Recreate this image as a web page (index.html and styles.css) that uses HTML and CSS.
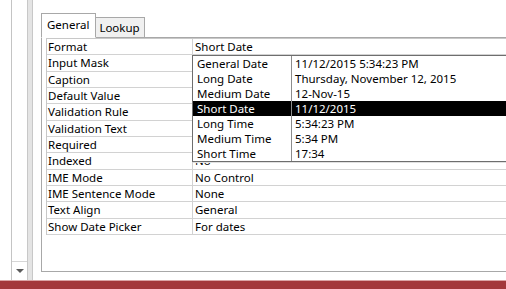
FILE: index.html
```html
<!DOCTYPE html>
<html lang="en">
<head>
    <meta charset="UTF-8">
    <title>Field Properties</title>
    <link rel="stylesheet" href="styles.css">
</head>
<body>
    <div class="app">
        <div class="main">
            <div class="gutter"></div>
            <div class="vscroll">
                <div class="scroll-down"><span class="arrow"></span></div>
            </div>
            <div class="splitter"></div>
            <div class="pane">
                <div class="tabs">
                    <div class="tab active">General</div>
                    <div class="tab">Lookup</div>
                </div>
                <div class="tab-frame">
                    <div class="grid">
                        <div class="row"><div class="label">Format</div><div class="value">Short Date</div></div>
                        <div class="row"><div class="label">Input Mask</div><div class="value"></div></div>
                        <div class="row"><div class="label">Caption</div><div class="value"></div></div>
                        <div class="row"><div class="label">Default Value</div><div class="value"></div></div>
                        <div class="row"><div class="label">Validation Rule</div><div class="value"></div></div>
                        <div class="row"><div class="label">Validation Text</div><div class="value"></div></div>
                        <div class="row"><div class="label">Required</div><div class="value"></div></div>
                        <div class="row"><div class="label">Indexed</div><div class="value">No</div></div>
                        <div class="row"><div class="label">IME Mode</div><div class="value">No Control</div></div>
                        <div class="row"><div class="label">IME Sentence Mode</div><div class="value">None</div></div>
                        <div class="row"><div class="label">Text Align</div><div class="value">General</div></div>
                        <div class="row"><div class="label">Show Date Picker</div><div class="value">For dates</div></div>

                        <!-- format dropdown -->
                        <div class="dropdown">
                            <div class="opt"><span class="name">General Date</span><span class="sample">11/12/2015 5:34:23 PM</span></div>
                            <div class="opt"><span class="name">Long Date</span><span class="sample">Thursday, November 12, 2015</span></div>
                            <div class="opt"><span class="name">Medium Date</span><span class="sample">12-Nov-15</span></div>
                            <div class="opt selected"><span class="name">Short Date</span><span class="sample">11/12/2015</span></div>
                            <div class="opt"><span class="name">Long Time</span><span class="sample">5:34:23 PM</span></div>
                            <div class="opt"><span class="name">Medium Time</span><span class="sample">5:34 PM</span></div>
                            <div class="opt"><span class="name">Short Time</span><span class="sample">17:34</span></div>
                        </div>
                    </div>
                </div>
            </div>
        </div>
        <div class="status"></div>
    </div>
</body>
</html>
```

FILE: styles.css
```css
body {
    margin: 0;
    background: #fff;
    font-family: "Noto Sans", "Open Sans", sans-serif;
    font-size: 11.5px;
    color: #000;
    overflow: hidden;
}
.app {
    width: 506px;
    height: 289px;
    display: flex;
    flex-direction: column;
}
.main {
    flex: 1;
    display: flex;
    min-height: 0;
}
.gutter {
    width: 11px;
    border-right: 1px solid #c4c4c4;
}
.vscroll {
    width: 15px;
    display: flex;
    flex-direction: column;
    justify-content: flex-end;
}
.scroll-down {
    height: 18px;
    border-top: 1px solid #d6d6d6;
    display: flex;
    align-items: center;
    justify-content: center;
}
.arrow {
    width: 0;
    height: 0;
    border-left: 4px solid transparent;
    border-right: 4px solid transparent;
    border-top: 4px solid #5a5a5a;
}
.splitter {
    width: 4px;
    background: #e4e4e4;
    border-left: 1px solid #c8c8c8;
    border-right: 1px solid #c8c8c8;
}
.pane {
    flex: 1;
    display: flex;
    flex-direction: column;
    padding: 14px 0 8px 8px;
    overflow: hidden;
}
.tabs {
    display: flex;
    align-items: flex-end;
    height: 23px;
    position: relative;
    z-index: 1;
}
.tab {
    border: 1px solid #a8a8a8;
    border-bottom: none;
    padding: 0 4px 0 3px;
    line-height: 19px;
    height: 19px;
    background: #f0f0f0;
}
.tab.active {
    height: 23px;
    line-height: 22px;
    padding: 0 6px 0 5px;
    background: #fff;
    border-bottom: 1px solid #fff;
    margin-bottom: -1px;
}
.tab + .tab {
    border-left: none;
}
.tab-frame {
    flex: 1;
    margin-right: -30px;
    border: 1px solid #a8a8a8;
    border-right: none;
    padding: 0 0 0 4px;
}
.grid {
    position: relative;
    border-top: 1px solid #c8c8c8;
    border-left: 1px solid #c8c8c8;
}
.row {
    display: flex;
    height: 16.33px;
    box-sizing: border-box;
    border-bottom: 1px solid #d2d2d2;
    line-height: 16px;
}
.label {
    width: 144px;
    padding-left: 1px;
    border-right: 1px solid #d2d2d2;
    white-space: nowrap;
}
.value {
    flex: 1;
    padding-left: 2px;
}
.dropdown {
    position: absolute;
    left: 145px;
    top: 16px;
    width: 340px;
    background: #fff;
    border: 1px solid #6e6e6e;
    box-shadow: 1px 1px 0 #e0e0e0;
}
.opt {
    display: flex;
    height: 15px;
    line-height: 15px;
}
.opt .name {
    width: 94px;
    padding-left: 4px;
    border-right: 1px solid #8c8c8c;
}
.opt .sample {
    padding-left: 3px;
    white-space: nowrap;
}
.opt.selected {
    background: #000;
    color: #fff;
}
.status {
    height: 8px;
    background: #a3383b;
    border-top: 1px solid #d9a4a4;
}
```
